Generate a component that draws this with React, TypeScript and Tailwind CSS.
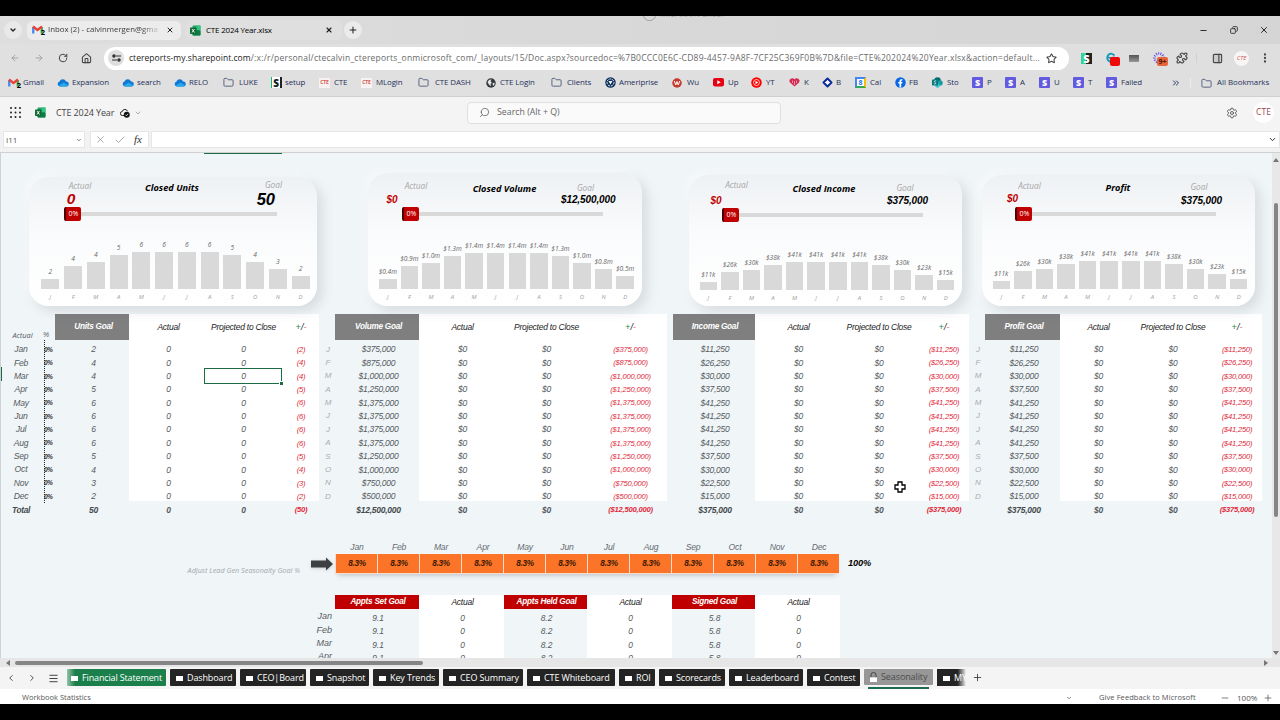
import type { ReactNode } from "react";
import {
  ArrowLeft,
  ArrowRight,
  Check,
  ChevronDown,
  ChevronLeft,
  ChevronRight,
  ChevronsRight,
  Copy,
  EllipsisVertical,
  Folder,
  House,
  Menu,
  Minus,
  PanelRight,
  Plus,
  Puzzle,
  RotateCw,
  Search,
  Settings,
  Star,
  X,
} from "lucide-react";

/* ---------- brand icons ---------- */

function ExcelIcon({ size = 11 }: { size?: number }) {
  return (
    <svg width={size} height={size} viewBox="0 0 22 22">
      <rect x="5" y="1" width="16" height="20" rx="2" fill="#21a366" />
      <rect x="5" y="11" width="16" height="10" rx="2" fill="#107c41" />
      <rect x="13" y="1" width="8" height="9" fill="#33c481" />
      <rect x="0" y="5" width="13" height="13" rx="1.5" fill="#0f6a37" />
      <path d="M4 8l5 7M9 8l-5 7" stroke="#fff" strokeWidth="1.8" />
    </svg>
  );
}

function GmailIcon() {
  return (
    <span className="relative block h-[10px] w-[12px] shrink-0">
      <svg width="11" height="9" viewBox="0 0 22 18" fill="none">
        <path d="M2.5 17V4" stroke="#4285f4" strokeWidth="4.5" />
        <path d="M19.5 17V4" stroke="#34a853" strokeWidth="4.5" />
        <path d="M2 3l9 7 9-7" stroke="#ea4335" strokeWidth="4.8" />
      </svg>
      <span className="absolute -right-[1px] bottom-[-1px] text-[7.5px] leading-[8px] font-bold text-black">2</span>
    </span>
  );
}

const Cloud = () => (
  <svg width="12" height="8" viewBox="0 0 24 16">
    <path d="M6 15a5 5 0 0 1-1-9.800A7 7 0 0 1 18 5a5 5 0 0 1 1 10z" fill="#0f78d4" />
    <path d="M3 13.500L13 7l9 5.500a4 4 0 0 1-3 2.500H6a5 5 0 0 1-3-1.500z" fill="#28a8ea" />
  </svg>
);

const FolderIcon = () => <Folder size={11} strokeWidth={2} className="text-[#4f5b7a]" />;

const CteIcon = () => (
  <span className="flex h-[10px] w-[11px] items-center justify-center bg-[#f8f3f2] text-[5px] font-bold text-[#d5564e]">
    CTE
  </span>
);

const SetupIcon = () => (
  <span className="flex h-[11px] w-[11px] items-center justify-center border-r-2 border-l border-r-[#222] border-l-[#15b77c] bg-white text-[10px] leading-none font-extrabold text-[#122]">
    S
  </span>
);

const StripeIcon = () => (
  <span className="flex h-[11px] w-[11px] items-center justify-center rounded-[1px] bg-[#635bdf] text-[9px] leading-none font-extrabold text-white">
    S
  </span>
);

const GlobeIcon = () => (
  <svg width="10" height="10" viewBox="0 0 20 20">
    <circle cx="10" cy="10" r="9.500" fill="#33373b" />
    <path d="M3 8c3-5 6-5 8-5l-2 4 3 2-3 3 1 4c-4-1-5-5-7-8zM13 11l4-2v4l-3 3z" fill="#e5e6e6" />
  </svg>
);

const AmeripriseIcon = () => (
  <svg width="11" height="11" viewBox="0 0 22 22">
    <circle cx="11" cy="11" r="10.500" fill="#0b2f5c" />
    <circle cx="11" cy="11" r="7" fill="none" stroke="#fff" strokeWidth="2" strokeDasharray="4 2" />
    <path d="M7 8h8l-4 7z" fill="#fff" />
  </svg>
);

const WuIcon = () => (
  <svg width="10" height="10" viewBox="0 0 20 20">
    <circle cx="10" cy="10" r="9.500" fill="#c8392b" />
    <path d="M4.500 6l3 8L10 7l2.500 7 3-8" fill="none" stroke="#fff" strokeWidth="2" />
  </svg>
);

const YouTubeIcon = () => (
  <svg width="11" height="9" viewBox="0 0 22 18">
    <rect width="22" height="17" rx="4" fill="#e60012" />
    <path d="M8.500 4.500v8l7-4z" fill="#fff" />
  </svg>
);

const YtMusicIcon = () => (
  <svg width="11" height="11" viewBox="0 0 22 22">
    <circle cx="11" cy="11" r="10.500" fill="#f00" />
    <circle cx="11" cy="11" r="6" fill="none" stroke="#fff" strokeWidth="1.500" />
    <path d="M9 7.500v7l5.500-3.500z" fill="#fff" />
  </svg>
);

const HeartIcon = () => (
  <svg width="11" height="9" viewBox="0 0 22 18">
    <path d="M11 17L2 9a5 5 0 0 1 9-6 5 5 0 0 1 9 6z" fill="#d6294f" />
    <path d="M7 5v5M11 6v8M15 5v5" stroke="#efb5c2" strokeWidth="1.500" />
  </svg>
);

const DiamondIcon = () => (
  <svg width="11" height="11" viewBox="0 0 22 22">
    <path d="M11 3l8 8-8 8-8-8z" fill="#fff" stroke="#0a2a9b" strokeWidth="4" strokeLinejoin="round" />
  </svg>
);

const CalendarIcon = () => (
  <span className="flex h-[11px] w-[11px] items-center justify-center border-2 border-t-[#4285f4] border-r-[#fbbc04] border-b-[#34a853] border-l-[#4285f4] bg-white text-[7px] leading-none font-bold text-[#1a73e8]">
    8
  </span>
);

const FacebookIcon = () => (
  <svg width="11" height="11" viewBox="0 0 22 22">
    <circle cx="11" cy="11" r="10.500" fill="#0866e8" />
    <path d="M9 21v-8H6.500v-3H9V8c0-3 2-4 6-3.500v2.700c-2-.2-2.600.1-2.600 1.300V10H15l-.5 3h-2.100v8z" fill="#fff" />
  </svg>
);

const SharePointIcon = () => (
  <svg width="11" height="11" viewBox="0 0 22 22">
    <circle cx="11" cy="7" r="6.500" fill="#036c70" />
    <circle cx="16" cy="12" r="5.500" fill="#1a9ba1" />
    <circle cx="11" cy="17" r="4.500" fill="#37c6d0" />
    <rect x="0" y="5" width="12" height="12" rx="1.500" fill="#03787c" />
    <path d="M8.500 8c-4-1.500-5 1.500-2.500 2.700 2.800 1.300 2 4.300-2.300 3" fill="none" stroke="#fff" strokeWidth="1.600" />
  </svg>
);

/* ---------- browser chrome ---------- */

const bookmarks: { label: string; icon: ReactNode; w: string; slot: string }[] = [
  { label: "Gmail", icon: <GmailIcon />, w: "w-[49px]", slot: "w-[15px]" },
  { label: "Expansion", icon: <Cloud />, w: "w-[65px]", slot: "w-[15px]" },
  { label: "search", icon: <Cloud />, w: "w-[52px]", slot: "w-[15px]" },
  { label: "RELO", icon: <Cloud />, w: "w-[49px]", slot: "w-[15px]" },
  { label: "LUKE", icon: <FolderIcon />, w: "w-[48px]", slot: "w-[16px]" },
  { label: "setup", icon: <SetupIcon />, w: "w-[48px]", slot: "w-[14px]" },
  { label: "CTE", icon: <CteIcon />, w: "w-[42px]", slot: "w-[15px]" },
  { label: "MLogin", icon: <CteIcon />, w: "w-[57px]", slot: "w-[15px]" },
  { label: "CTE DASH", icon: <FolderIcon />, w: "w-[68px]", slot: "w-[17px]" },
  { label: "CTE Login", icon: <GlobeIcon />, w: "w-[65px]", slot: "w-[14px]" },
  { label: "Clients", icon: <FolderIcon />, w: "w-[54px]", slot: "w-[16px]" },
  { label: "Ameriprise", icon: <AmeripriseIcon />, w: "w-[67px]", slot: "w-[14px]" },
  { label: "Wu", icon: <WuIcon />, w: "w-[41px]", slot: "w-[15px]" },
  { label: "Up", icon: <YouTubeIcon />, w: "w-[38px]", slot: "w-[15px]" },
  { label: "YT", icon: <YtMusicIcon />, w: "w-[38px]", slot: "w-[15px]" },
  { label: "K", icon: <HeartIcon />, w: "w-[33px]", slot: "w-[15px]" },
  { label: "B", icon: <DiamondIcon />, w: "w-[33px]", slot: "w-[14px]" },
  { label: "Cal", icon: <CalendarIcon />, w: "w-[40px]", slot: "w-[15px]" },
  { label: "FB", icon: <FacebookIcon />, w: "w-[37px]", slot: "w-[14px]" },
  { label: "Sto", icon: <SharePointIcon />, w: "w-[40px]", slot: "w-[15px]" },
  { label: "P", icon: <StripeIcon />, w: "w-[33px]", slot: "w-[15px]" },
  { label: "A", icon: <StripeIcon />, w: "w-[34px]", slot: "w-[15px]" },
  { label: "U", icon: <StripeIcon />, w: "w-[34px]", slot: "w-[15px]" },
  { label: "T", icon: <StripeIcon />, w: "w-[33px]", slot: "w-[15px]" },
  { label: "Failed", icon: <StripeIcon />, w: "w-[65px]", slot: "w-[15px]" },
];

function TabStrip() {
  return (
    <div className="relative flex h-[28px] items-center overflow-hidden bg-linear-to-r from-[#dedede] via-[#d8d8d8] to-[#d5d5d5] pl-1 text-[#222]">
      <span className="flex h-[18px] w-[18px] items-center justify-center rounded-full bg-[#e9e9e9]">
        <ChevronDown size={8} strokeWidth={4} />
      </span>
      <div className="ml-[5px] flex h-[19px] w-[154px] items-center rounded-md bg-[#ececec] pl-[5px]">
        <GmailIcon />
        <span className="ml-1 w-[113px] bg-linear-to-r from-[#333] from-82% to-[#ececec] bg-clip-text text-[7.8px] whitespace-nowrap text-transparent">
          Inbox (2) - calvinmergen@gma
        </span>
        <X size={8} strokeWidth={3} className="ml-[5px]" />
      </div>
      <div className="ml-[4px] flex h-[20px] w-[157px] items-center rounded-md bg-[#dfdfdf] pl-[5px]">
        <ExcelIcon />
        <span className="ml-[5px] w-[119px] text-[8px] font-medium tracking-[-0.2px] text-black">CTE 2024 Year.xlsx</span>
        <X size={8} strokeWidth={3.5} />
      </div>
      <span className="ml-[2px] flex h-[18px] w-[18px] items-center justify-center rounded-full bg-[#ebebeb]">
        <Plus size={10} strokeWidth={2.5} />
      </span>
      <span className="absolute top-[-7px] left-[643px] h-[12px] w-[13px] rounded-full border border-[#a5a5a5]" />
      <span className="absolute top-[-9px] left-[660px] text-[9px] text-[#aaa]">Microsoft Excel</span>
      <div className="ml-auto flex items-center pr-[11px]">
        <Minus size={9} strokeWidth={2.5} />
        <Copy size={8} strokeWidth={2.5} className="ml-[22px] -scale-x-100" />
        <X size={10} strokeWidth={2.3} className="ml-[21px]" />
      </div>
    </div>
  );
}

function AddressRow() {
  return (
    <div className="flex h-[27px] items-center pt-px pl-[10px] text-[#444]">
      <ArrowLeft size={10} className="text-[#999]" />
      <ArrowRight size={10} className="ml-[14px] text-[#999]" />
      <RotateCw size={10} strokeWidth={2.4} className="ml-[14px]" />
      <House size={11} strokeWidth={2.3} className="ml-[13px]" />
      <div className="ml-[12px] flex h-[23px] w-[965px] items-center rounded-full bg-white pl-[4px]">
        <span className="flex h-[16px] w-[16px] items-center justify-center rounded-full bg-[#dedede]">
          <svg width="9" height="8" viewBox="0 0 18 16" fill="none" stroke="#333" strokeWidth="2.400">
            <path d="M8 4h10M0 12h10" />
            <circle cx="4" cy="4" r="2.300" fill="#333" />
            <circle cx="14" cy="12" r="2.300" fill="#333" />
          </svg>
        </span>
        <div className="ml-[5px] w-[917px] text-[8.5px] whitespace-nowrap text-[#6a6a6a]">
          <span className="tracking-[0.05px] text-[#222]">ctereports-my.sharepoint.com</span>
          <span className="tracking-[0.228px]">
            /:x:/r/personal/ctecalvin_ctereports_onmicrosoft_com/_layouts/15/Doc.aspx?sourcedoc=%7B0CCC0E6C-CD89-4457-9A8F-7CF25C369F0B%7D&amp;file=CTE%202024%20Year.xlsx&amp;action=default...
          </span>
        </div>
        <Star size={11} strokeWidth={2.3} />
      </div>
      <div className="ml-[12px] flex h-[11px] w-[11px] items-center justify-center bg-linear-to-r from-[#35d39b] from-50% to-[#222] to-50% text-[11px] leading-none font-extrabold text-white">
        S
      </div>
      <span className="relative ml-[13px] h-[12px] w-[15px]">
        <svg width="12" height="12" viewBox="0 0 24 24" fill="none" stroke="#1497b8" strokeWidth="3.500">
          <path d="M19 7a8 8 0 1 0 0 9M5 9c5 5 9 4 14 1" />
        </svg>
        <span className="absolute top-[5px] left-[5px] h-[9px] w-[10px] rounded-[2px] bg-[#ee0a0a]" />
      </span>
      <span className="ml-[9px] h-[7px] w-[10px] bg-linear-to-b from-[#555] to-[#999]" />
      <span className="relative ml-[14px] h-[12px] w-[15px]">
        <svg width="12" height="12" viewBox="0 0 24 24" fill="none" stroke="#6c5ce7" strokeWidth="2.500">
          <circle cx="12" cy="12" r="9" strokeWidth="5" strokeDasharray="2.200 2.200" />
        </svg>
        <span className="absolute top-[5px] left-[4px] flex h-[9px] w-[11px] items-center justify-center rounded-[2px] bg-[#e8643c] text-[7px] leading-none font-bold text-[#4a1608]">
          9+
        </span>
      </span>
      <Puzzle size={12} strokeWidth={2.4} className="ml-[8px]" />
      <span className="ml-[8px] h-[10px] w-px bg-[#d0d0d0]" />
      <PanelRight size={11} strokeWidth={2.4} className="ml-[15px] fill-[#ccc]" />
      <span className="ml-[11px] flex h-[15px] w-[15px] items-center justify-center rounded-full bg-[#f8f5f5] text-[6px] text-[#d0554f] italic">
        CTE
      </span>
      <EllipsisVertical size={12} strokeWidth={2.6} className="ml-[10px]" />
    </div>
  );
}

function BookmarksBar() {
  return (
    <div className="flex h-[26px] items-center border-b border-[#cfcfcf] pb-px pl-2 text-[7.9px] font-medium tracking-[-0.1px] text-[#27305c]">
      {bookmarks.map(({ label, icon, w, slot }, i) => (
        <div key={i} className={`flex shrink-0 items-center whitespace-nowrap ${w}`}>
          <span className={`shrink-0 ${slot}`}>{icon}</span>
          {label}
        </div>
      ))}
      <ChevronsRight size={10} strokeWidth={2.3} className="shrink-0" />
      <span className="ml-[9px] h-[10px] w-px bg-[#eee]" />
      <span className="ml-[10px] w-[16px] shrink-0">
        <FolderIcon />
      </span>
      <span className="tracking-[-0.03px] whitespace-nowrap">All Bookmarks</span>
    </div>
  );
}

function ExcelHeader() {
  return (
    <div className="flex h-[34px] items-center bg-[#f4f4f4] pb-[3px] pl-[10px]">
      <svg width="11" height="11" viewBox="0 0 11 11" fill="#222">
        {[1, 5.5, 10].map((y) => [1, 5.5, 10].map((x) => <circle key={`${x}-${y}`} cx={x} cy={y} r="1" />))}
      </svg>
      <span className="ml-[14px]">
        <ExcelIcon />
      </span>
      <span className="ml-[10px] w-[64px] text-[9px] tracking-[-0.1px] whitespace-nowrap text-[#444]">CTE 2024 Year</span>
      <svg width="10" height="10" viewBox="0 0 20 20" fill="none" stroke="#222" strokeWidth="2" className="shrink-0">
        <path d="M8 15H5a4 4 0 0 1-.5-8A5.500 5.500 0 0 1 15 6.500" />
        <circle cx="13.500" cy="13.500" r="6" fill="#111" stroke="none" />
        <path d="M10.800 13.500l2 2 3.500-3.800" stroke="#fff" strokeWidth="1.600" />
      </svg>
      <ChevronDown size={8} className="ml-[4px] text-[#888]" />
      <div className="ml-[325px] flex h-[22px] w-[314px] items-center rounded border border-[#e0e0e0] bg-[#fafafa] pl-[11px] text-[8.8px] text-[#666]">
        <Search size={11} strokeWidth={1.8} className="-scale-x-100" />
        <span className="ml-[7px]">Search (Alt + Q)</span>
      </div>
      <Settings size={12} strokeWidth={1.8} className="ml-auto text-[#555]" />
      <span className="mr-[6px] ml-[15px] flex h-[21px] w-[21px] items-center justify-center rounded-full bg-white text-[8.5px] text-[#a0474c]">
        CTE
      </span>
    </div>
  );
}

function FormulaBar() {
  return (
    <div className="flex h-[22px] items-start border-b border-[#d0d0d0] bg-[#f2f2f2] pl-[3px]">
      <div className="flex h-[17px] w-[82px] items-center justify-between border border-[#e6e6e6] bg-white pt-px pr-[2px] pl-[2px] text-[8px] text-[#555]">
        I11
        <ChevronDown size={6} strokeWidth={3} />
      </div>
      <div className="ml-[5px] flex h-[17px] w-[59px] items-center border border-[#e6e6e6] bg-white pl-[4px] text-[#999]">
        <X size={11} strokeWidth={1.7} />
        <Check size={12} strokeWidth={1.7} className="ml-[8px]" />
        <span className="ml-[8px] font-['Liberation_Serif',serif] text-[11px] text-[#333] italic">fx</span>
      </div>
      <div className="ml-[2px] flex h-[17px] flex-1 items-center justify-end border border-[#e6e6e6] bg-white pr-[2px]">
        <ChevronDown size={9} strokeWidth={2.6} className="text-[#333]" />
      </div>
    </div>
  );
}

/* ---------- summary cards ---------- */

const months = ["Jan", "Feb", "Mar", "Apr", "May", "Jun", "Jul", "Aug", "Sep", "Oct", "Nov", "Dec"];
const kLabels = ["$11k", "$26k", "$30k", "$38k", "$41k", "$41k", "$41k", "$41k", "$38k", "$30k", "$23k", "$15k"];
const kHeights = [8, 18, 20, 25, 28, 28, 28, 28, 25, 20, 15, 10];

const cards = [
  {
    title: "Closed Units",
    actual: "0",
    goal: "50",
    box: "ml-[29px] h-[129px] w-[288px]",
    cols: ["w-[102px] pt-[2px]", "w-[82px] pt-[4px]", "w-[121px] pt-px"],
    actualCls: "w-[84px] text-[15.5px]",
    goalCls: "mr-[42px] text-[16.5px]",
    values: "top-[13px]",
    track: "mt-[29px] ml-[35px] w-[213px]",
    chart: "ml-[10px] w-[273px] pb-[3px]",
    bar: "w-[18px]",
    labels: ["2", "4", "4", "5", "6", "6", "6", "6", "5", "4", "3", "2"],
    heights: [10, 23, 27, 34, 37, 37, 37, 37, 34, 27, 20, 13],
  },
  {
    title: "Closed Volume",
    actual: "$0",
    goal: "$12,500,000",
    box: "ml-[51px] h-[133px] w-[274px]",
    cols: ["w-[96px] pt-[6px]", "w-[81px] pt-[9px]", "w-[81px] pt-[8px]"],
    actualCls: "w-[48px] text-[10px]",
    goalCls: "mr-[26.5px] text-[10px] tracking-[-0.1px]",
    values: "top-[17px]",
    track: "mt-[33px] ml-[34px] w-[201px]",
    chart: "ml-[9px] w-[259px] pb-[3px]",
    bar: "w-[17.5px]",
    labels: ["$0.4m", "$0.9m", "$1.0m", "$1.3m", "$1.4m", "$1.4m", "$1.4m", "$1.4m", "$1.3m", "$1.0m", "$0.8m", "$0.5m"],
    heights: [10, 23, 26, 33, 36, 36, 36, 36, 33, 26, 20, 13],
  },
  {
    title: "Closed Income",
    actual: "$0",
    goal: "$375,000",
    box: "ml-[47px] h-[131px] w-[273px]",
    cols: ["w-[95px] pt-[3px]", "w-[80px] pt-[7px]", "w-[82px] pt-[6px]"],
    actualCls: "w-[54px] text-[10px]",
    goalCls: "mr-[34px] text-[10px] tracking-[-0.1px]",
    values: "top-[16px]",
    track: "mt-[32px] ml-[33px] w-[201px]",
    chart: "ml-[8.5px] w-[259px] pb-[2px]",
    bar: "w-[17.5px]",
    labels: kLabels,
    heights: kHeights,
  },
  {
    title: "Profit",
    actual: "$0",
    goal: "$375,000",
    box: "ml-[20px] h-[131px] w-[273px]",
    cols: ["w-[95px] pt-[4px]", "w-[82px] pt-[6px]", "w-[80px] pt-[5px]"],
    actualCls: "w-[61px] text-[10px] -mt-[3px]",
    goalCls: "mr-[33px] text-[10px] tracking-[-0.1px]",
    values: "top-[16px]",
    track: "mt-[31px] ml-[33px] w-[201px]",
    chart: "ml-[8.5px] w-[259px] pb-[3px]",
    bar: "w-[17.5px]",
    labels: kLabels,
    heights: kHeights,
  },
];

function SummaryCard({ card }: { card: (typeof cards)[number] }) {
  return (
    <div
      className={`relative flex shrink-0 flex-col rounded-[20px] bg-linear-to-b from-[#eef1f4] via-[#fafbfc] via-45% to-white shadow-[5px_5px_12px_rgba(90,95,105,0.17),-3px_-3px_8px_rgba(255,255,255,0.6)] ${card.box}`}
    >
      <div className="flex h-[14px] items-start text-center text-[8.3px] leading-[13px] text-[#a6a6a6] italic">
        <span className={`shrink-0 ${card.cols[0]}`}>Actual</span>
        <span className={`shrink-0 text-[9.2px] font-bold whitespace-nowrap text-black ${card.cols[1]}`}>{card.title}</span>
        <span className={`shrink-0 ${card.cols[2]}`}>Goal</span>
      </div>
      {/* the values overlap the heading row, so they sit on top of it */}
      <div className={`absolute inset-x-0 flex h-[18px] items-center justify-between font-['Liberation_Sans',sans-serif] font-bold italic ${card.values}`}>
        <span className={`text-center text-[#c00000] ${card.actualCls}`}>{card.actual}</span>
        <span className={`text-black ${card.goalCls}`}>{card.goal}</span>
      </div>
      <div className={`-translate-y-[13px] ${card.track}`}>
        <div className="flex h-[14px] items-center">
          <span className="flex h-[14px] w-[17px] shrink-0 items-center justify-center rounded-[2px] border-l-2 border-[#4a0000] bg-[#c00000] text-[7px] font-medium text-white">
            0%
          </span>
          <span className="h-[4px] flex-1 bg-[#d9d9d9]" />
        </div>
      </div>
      <div className={`mt-auto flex items-end ${card.chart}`}>
        {card.labels.map((label, i) => (
          <div key={i} className="flex flex-1 flex-col items-center text-[6.6px] text-[#666] italic">
            <span className="mb-[3px] leading-[9px] whitespace-nowrap">{label}</span>
            <span className={`bg-[#d9d9d9] ${card.bar}`} style={{ height: card.heights[i] }} />
            <span className="mt-[3px] text-[6px] leading-[11px] text-[#a0a0a0]">{months[i][0]}</span>
          </div>
        ))}
      </div>
    </div>
  );
}

/* ---------- goal tables ---------- */

const units = ["2", "4", "4", "5", "6", "6", "6", "6", "5", "4", "3", "2"];
const volume = ["375,000", "875,000", "1,000,000", "1,250,000", "1,375,000", "1,375,000", "1,375,000", "1,375,000", "1,250,000", "1,000,000", "750,000", "500,000"].map((v) => "$" + v);
const income = ["11,250", "26,250", "30,000", "37,500", "41,250", "41,250", "41,250", "41,250", "37,500", "30,000", "22,500", "15,000"].map((v) => "$" + v);

const tables = [
  { name: "Units Goal", rows: units, total: "50", zero: "0", gap: "", w: ["w-[74px] pl-[3px]", "w-[75px] pl-[4px]", "w-[78px] pl-px", "w-[37px] pl-px"] },
  { name: "Volume Goal", rows: volume, total: "$12,500,000", zero: "$0", gap: "", w: ["w-[84px] pl-[3px]", "w-[86px] pl-[1px]", "w-[83px]", "w-[79px] pl-[6px]"] },
  { name: "Income Goal", rows: income, total: "$375,000", zero: "$0", gap: "ml-[6px]", w: ["w-[82px] pl-[2px]", "w-[87px]", "w-[74px]", "w-[53px] pl-[3px]"] },
  { name: "Profit Goal", rows: income, total: "$375,000", zero: "$0", gap: "", w: ["w-[75px] pl-[3px]", "w-[77px]", "w-[72px]", "w-[53px] pl-[3px]"] },
];

function GoalTable({ table }: { table: (typeof tables)[number] }) {
  const zeros = months.map(() => table.zero);
  const columns = [
    { head: table.name, rows: table.rows, total: table.total },
    { head: "Actual", rows: zeros, total: table.zero },
    { head: "Projected to Close", rows: zeros, total: table.zero },
    { head: "+/-", rows: table.rows.map((v) => `(${v})`), total: `(${table.total})` },
  ];
  return (
    <div className={`flex shrink-0 ${table.gap}`}>
      {columns.map((col, c) => (
        <div
          key={c}
          className={`text-center whitespace-nowrap ${c === 3 ? "text-[7.6px] tracking-[-0.2px] text-[#e0283a]" : "text-[8.5px] tracking-[-0.25px] text-[#555b62]"}`}
        >
          <div className={c === 0 ? "h-[187px]" : "h-[187px] bg-white"}>
            <div
              className={`flex h-[26px] items-center justify-center pt-px ${table.w[c]} ${c === 0 ? "bg-[#7f7f7f] text-[8.2px] font-bold text-white" : "text-[8.5px] text-[#1d1d1d]"}`}
            >
              {c === 3 ? (
                <span className="pt-px text-[9px] tracking-normal">
                  <span className="text-[#1a8a55]">+</span>/<span className="text-[#d33]">-</span>
                </span>
              ) : (
                col.head
              )}
            </div>
            <div className="pt-[3px]">
              {col.rows.map((v, i) => (
                <div key={i} className={`relative flex h-[13.36px] items-center justify-center ${table.w[c]}`}>
                  {v}
                  {table.name === "Units Goal" && c === 2 && i === 2 && (
                    <span className="absolute inset-x-0 -top-[2px] h-[16px] border-[1.5px] border-[#1d6b45]">
                      <span className="absolute -right-[2px] -bottom-[2px] h-[3px] w-[3px] bg-[#1d6b45] outline outline-white" />
                    </span>
                  )}
                </div>
              ))}
            </div>
          </div>
          <div className={`mt-[2.5px] flex h-[13px] items-center justify-center font-bold ${table.w[c]} ${c === 0 ? "text-[#444a50]" : ""}`}>
            {col.total}
          </div>
        </div>
      ))}
    </div>
  );
}

function MonthLetters() {
  return (
    <div className="w-4 shrink-0 pt-[29px] pl-[2px] text-center text-[#a9aeb4]">
      {months.map((m) => (
        <div key={m} className="flex h-[13.36px] items-center justify-center">
          {m[0]}
        </div>
      ))}
    </div>
  );
}

function RowLabels() {
  return (
    <div className="flex w-[55px] shrink-0 pt-[16px] text-[#555b62]">
      <div className="w-[42px] text-center">
        <div className="h-[13px] pl-[3px] font-['Open_Sans',sans-serif] text-[7.4px]">Actual</div>
        {months.map((m) => (
          <div key={m} className="flex h-[13.36px] items-center justify-center text-[8.6px] tracking-[-0.2px]">
            {m}
          </div>
        ))}
        <div className="flex h-[13.36px] items-center justify-center pt-px text-[8.3px] font-bold tracking-[-0.3px] text-[#444a50]">Total</div>
      </div>
      <div className="w-[10px] pl-px">
        <div className="h-[10px] text-[7px]">%</div>
        <div className="ml-[1px] border-l-[1.5px] border-dotted border-[#222] pt-[3px]">
          {months.map((m) => (
            <div key={m} className="-ml-px flex h-[13.36px] items-center text-[6.5px] font-bold tracking-[-0.6px] text-[#333]">
              0%
            </div>
          ))}
        </div>
      </div>
    </div>
  );
}

/* ---------- seasonality + appointments ---------- */

function SeasonalityRow() {
  return (
    <div className="mt-[24.5px] flex h-[34px] items-start">
      <span className="w-[300px] shrink-0 pt-[22px] text-right font-['Open_Sans',sans-serif] text-[7.25px] leading-[14px] whitespace-nowrap text-[#a3a8ad]">
        Adjust Lead Gen Seasonalty Goal %
      </span>
      <svg width="24" height="16" viewBox="0 0 24 16" className="mt-[15px] ml-[11px] shrink-0 drop-shadow">
        <path d="M0 4.500h15V1.500L22 8 15 14.500v-3H0z" fill="#3c4043" />
      </svg>
      <div>
        <div className="flex h-[13px]">
          {months.map((m) => (
            <span key={m} className="flex w-[42px] items-center justify-center pl-[2px] text-[8.6px] tracking-[-0.2px] text-[#666b72]">
              {m}
            </span>
          ))}
        </div>
        <div className="flex h-[20px] shadow-[0_4px_5px_-3px_rgba(80,80,90,0.35)]">
          {months.map((m) => (
            <span
              key={m}
              className="flex w-[42px] items-center justify-center border-b border-l border-[#f5dccd] bg-[#fb7427] pt-px pl-[1px] text-[8.2px] font-bold tracking-[-0.25px] text-[#3d1a06]"
            >
              8.3%
            </span>
          ))}
        </div>
      </div>
      <span className="ml-[9px] pt-[15px] text-[9.2px] leading-[14px] font-bold tracking-[-0.1px] text-black">100%</span>
    </div>
  );
}

const appts = [
  { head: "Appts Set Goal", value: "9.1", w: "w-[84px]" },
  { head: "Actual", value: "0", w: "w-[85px]" },
  { head: "Appts Held Goal", value: "8.2", w: "w-[83px]" },
  { head: "Actual", value: "0", w: "w-[85px]" },
  { head: "Signed Goal", value: "5.8", w: "w-[83px]" },
  { head: "Actual", value: "0", w: "w-[85px]" },
];

function AppointmentsTable() {
  return (
    <div className="mt-[20px] flex">
      <div className="w-[332px] pt-[15px] text-right text-[9px] text-[#555b62]">
        {months.slice(0, 4).map((m) => (
          <div key={m} className="flex h-[13.4px] items-center justify-end">
            {m}
          </div>
        ))}
      </div>
      <div className="ml-[3px] flex">
        {appts.map((col, i) => (
          <div key={i} className={`text-center ${col.w} ${i % 2 ? "bg-white" : ""}`}>
            <div
              className={`flex h-[14px] items-center justify-center pl-[2px] tracking-[-0.25px] ${i % 2 ? "text-[8.5px] text-[#222]" : "bg-[#c00000] text-[8.2px] font-bold text-white"}`}
            >
              {col.head}
            </div>
            <div className="pt-[2.5px]">
              {months.slice(0, 4).map((m) => (
                <div key={m} className="flex h-[13.4px] items-center justify-center pl-[2px] text-[8.4px] text-[#555b62]">
                  {col.value}
                </div>
              ))}
            </div>
          </div>
        ))}
      </div>
    </div>
  );
}

/* ---------- sheet tabs + status ---------- */

const sheets = [
  { name: "Dashboard", w: "w-[66px]" },
  { name: "CEO|Board", w: "w-[66px]" },
  { name: "Snapshot", w: "w-[59px]" },
  { name: "Key Trends", w: "w-[66px]" },
  { name: "CEO Summary", w: "w-[80px]" },
  { name: "CTE Whiteboard", w: "w-[88px]" },
  { name: "ROI", w: "w-[36px]" },
  { name: "Scorecards", w: "w-[66px]" },
  { name: "Leaderboard", w: "w-[74px]" },
  { name: "Contest", w: "w-[53px]" },
];

const LockBody = () => <span className="mt-[2px] h-[5px] w-[7px] shrink-0 bg-white" />;

function SheetTabs() {
  return (
    <div className="flex h-[22px] items-start bg-[#f4f4f4] pt-[2px] text-[9px] text-white">
      <div className="flex h-[18px] w-[67px] items-center pl-[6px] text-[#333]">
        <ChevronLeft size={10} />
        <ChevronRight size={10} className="ml-[11px]" />
        <Menu size={11} className="ml-[11px]" />
      </div>
      <div className="flex h-[17px] w-[99px] items-center gap-[4px] rounded-[1px] bg-linear-to-r from-[#8fc4a9] to-[#1b7f4c] to-8% pl-[4px] whitespace-nowrap">
        <LockBody />
        <span className="tracking-[-0.14px]">Financial Statement</span>
      </div>
      {sheets.map((s) => (
        <div key={s.name} className={`ml-[4px] flex h-[17px] shrink-0 items-center gap-[4px] rounded-[1px] bg-[#242424] pl-[6px] whitespace-nowrap ${s.w}`}>
          <LockBody />
          <span className="tracking-[-0.12px]">{s.name}</span>
        </div>
      ))}
      <div className="ml-[4px] w-[69px] shrink-0">
        <div className="flex h-[16px] items-center gap-[3px] rounded-[1px] bg-[#979797] pl-[5px] font-medium text-[#4c4c4c]">
          <svg width="9" height="11" viewBox="0 0 9 11" className="shrink-0">
            <path d="M2 5V3a2.500 2.500 0 0 1 5 0v2" fill="none" stroke="#444" />
            <rect x="0.500" y="5" width="8" height="5.500" fill="#fff" stroke="#666" strokeWidth="0.500" />
          </svg>
          <span className="tracking-[-0.1px]">Seasonality</span>
        </div>
        <div className="mt-[2px] ml-[4px] h-[2px] w-[61px] bg-[#1d6b55]" />
      </div>
      <div className="ml-[4px] flex h-[17px] w-[29px] items-center gap-[4px] bg-linear-to-r from-[#242424] from-70% to-[#f4f4f4] pl-[6px]">
        <LockBody />
        <span className="w-[12px]">MY</span>
      </div>
      <Plus size={11} strokeWidth={1.8} className="mt-[3px] ml-[6px] text-[#333]" />
    </div>
  );
}

function StatusBar() {
  return (
    <div className="flex h-[15px] items-center bg-white pt-[3px] pl-[22px] text-[7.5px] text-[#555]">
      Workbook Statistics
      <ChevronDown size={6} strokeWidth={3} className="ml-auto" />
      <span className="ml-[27px] w-[97px] tracking-[0.08px] whitespace-nowrap">Give Feedback to Microsoft</span>
      <Minus size={10} strokeWidth={1.8} className="ml-[24px]" />
      <span className="w-[27px] pl-[7px] text-[8px]">100%</span>
      <Plus size={10} strokeWidth={1.8} className="mr-[7px] ml-[6px]" />
    </div>
  );
}

export default function App() {
  return (
    <div className="flex h-[720px] w-[1280px] flex-col overflow-hidden bg-black pt-4 font-['Open_Sans','Noto_Sans',sans-serif] leading-normal">
      <TabStrip />
      <div className="bg-linear-to-r from-[#e0e0e0] to-[#dedfde]">
        <AddressRow />
        <BookmarksBar />
      </div>
      <ExcelHeader />
      <FormulaBar />

      <div className="flex h-[505px] bg-[#f0f5f7]">
        <div className="relative w-[1272px] overflow-hidden border-l border-[#cfd2d4] font-['Liberation_Sans',sans-serif] text-[8px] italic">
          <div className="-ml-px">
            <div className="flex h-[153px] items-end font-['Open_Sans',sans-serif] not-italic">
              {cards.map((card) => (
                <SummaryCard key={card.title} card={card} />
              ))}
            </div>
            <div className="mt-[8px] flex">
              <RowLabels />
              <GoalTable table={tables[0]} />
              <MonthLetters />
              <GoalTable table={tables[1]} />
              <GoalTable table={tables[2]} />
              <MonthLetters />
              <GoalTable table={tables[3]} />
            </div>
            <SeasonalityRow />
            <AppointmentsTable />
          </div>
          {/* header marks of the selected column and row */}
          <span className="absolute top-0 left-[203px] h-px w-[78px] bg-[#1d6b45]" />
          <span className="absolute top-[214px] left-0 h-[14px] w-px bg-[#1d6b45]" />
          <svg width="12" height="12" viewBox="0 0 12 12" className="absolute top-[328px] left-[893px]">
            <path d="M4 1h4v3h3v4H8v3H4V8H1V4h3z" fill="#fff" stroke="#000" strokeWidth="1.300" />
          </svg>
        </div>
        <div className="flex w-[8px] flex-col items-center bg-[#e8e8e8] text-[#777]">
          <svg width="6" height="5" viewBox="0 0 6 5" className="mt-[4px]">
            <path d="M0 5l3-4 3 4z" fill="currentColor" />
          </svg>
          <span className="mt-[41px] h-[314px] w-[4px] rounded-full bg-[#858585]" />
          <svg width="6" height="5" viewBox="0 0 6 5" className="mt-auto mb-[2px]">
            <path d="M0 0l3 4 3-4z" fill="currentColor" />
          </svg>
        </div>
      </div>

      <div className="flex h-[9px] items-center bg-[#e6e6e6] px-[5px] text-[#777]">
        <svg width="5" height="6" viewBox="0 0 5 6">
          <path d="M5 0L1 3l4 3z" fill="currentColor" />
        </svg>
        <span className="ml-[5px] h-[4px] w-[408px] rounded-full bg-[#858585]" />
        <svg width="5" height="6" viewBox="0 0 5 6" className="mr-[6px] ml-auto">
          <path d="M0 0l4 3-4 3z" fill="currentColor" />
        </svg>
      </div>
      <SheetTabs />
      <StatusBar />
    </div>
  );
}
